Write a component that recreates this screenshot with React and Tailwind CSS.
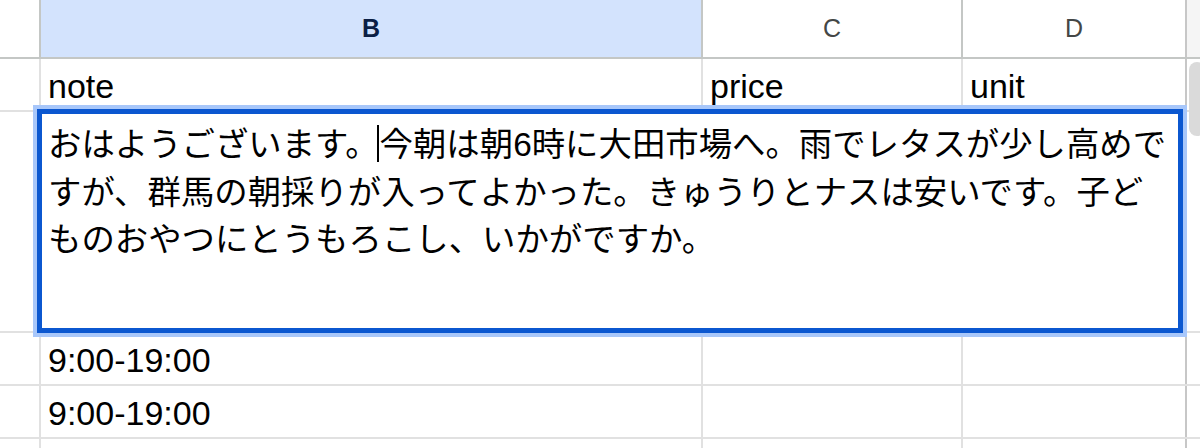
import React from "react";

const font = { fontFamily: '"Liberation Sans", Arial, "Noto Sans CJK JP", sans-serif' };

function Row({ h, cells }) {
  return (
    <div className={`flex border-b-2 border-[#e1e1e1] ${h}`}>
      <div className="w-[41px] shrink-0 border-r-2 border-[#e1e1e1]" />
      <div className="w-[662px] shrink-0 border-r-2 border-[#e1e1e1] flex items-end pl-[7px] pb-[4px] text-[34px] text-black leading-[39px]">
        {cells[0]}
      </div>
      <div className="w-[260px] shrink-0 border-r-2 border-[#e1e1e1] flex items-end pl-[7px] pb-[4px] text-[34px] text-black leading-[39px]">
        {cells[1]}
      </div>
      <div className="w-[224px] shrink-0 border-r-2 border-[#c7c7c7] flex items-end pl-[7px] pb-[4px] text-[34px] text-black leading-[39px]">
        {cells[2]}
      </div>
      <div className="flex-1 bg-white" />
    </div>
  );
}

export default function App() {
  return (
    <div className="relative w-[1200px] h-[448px] overflow-hidden bg-white" style={font}>
      {/* header */}
      <div className="flex h-[59px] border-b-2 border-[#c4c7c5]">
        <div className="w-[41px] shrink-0 border-r-2 border-[#c4c7c5] bg-white" />
        <div className="w-[662px] shrink-0 border-r-2 border-[#c4c7c5] bg-[#d3e3fd] flex items-center justify-center text-[25px] font-bold text-[#0b1f45]">
          B
        </div>
        <div className="w-[260px] shrink-0 border-r-2 border-[#c4c7c5] bg-white flex items-center justify-center text-[25px] text-[#444746]">
          C
        </div>
        <div className="w-[224px] shrink-0 border-r-2 border-[#c7c7c7] bg-white flex items-center justify-center text-[25px] text-[#444746]">
          D
        </div>
        <div className="flex-1 bg-[#f5f5f5]" />
      </div>
      <Row h="h-[53px]" cells={["note", "price", "unit"]} />
      <Row h="h-[221px]" cells={["", "", ""]} />
      <Row h="h-[53px]" cells={["9:00-19:00", "", ""]} />
      <Row h="h-[53px]" cells={["9:00-19:00", "", ""]} />
      <Row h="h-[53px]" cells={["", "", ""]} />

      {/* scrollbar thumb */}
      <div className="absolute left-[1189px] top-[62px] w-[16px] h-[74px] rounded-[8px] bg-[#dadada]" />

      {/* cell editor overlay */}
      <div className="absolute left-[33px] top-[105px] w-[1154px] h-[232px] bg-[#a8c7fa] p-[4px]">
        <div className="w-full h-full border-[5px] border-[#0b57d0] bg-white pl-[6px] pt-[7px] text-[33.4px] leading-[47.5px] text-black">
          <div className="whitespace-nowrap">
            おはようございます。
            <span className="inline-block w-[2px] h-[37px] bg-black align-[-6px] -ml-[2px] mr-[1px]" />
            今朝は朝6時に大田市場へ。雨でレタスが少し高めで
          </div>
          <div className="whitespace-nowrap">
            すが、群馬の朝採りが入ってよかった。きゅうりとナスは安いです。子ど
          </div>
          <div className="whitespace-nowrap">ものおやつにとうもろこし、いかがですか。</div>
        </div>
      </div>
    </div>
  );
}
